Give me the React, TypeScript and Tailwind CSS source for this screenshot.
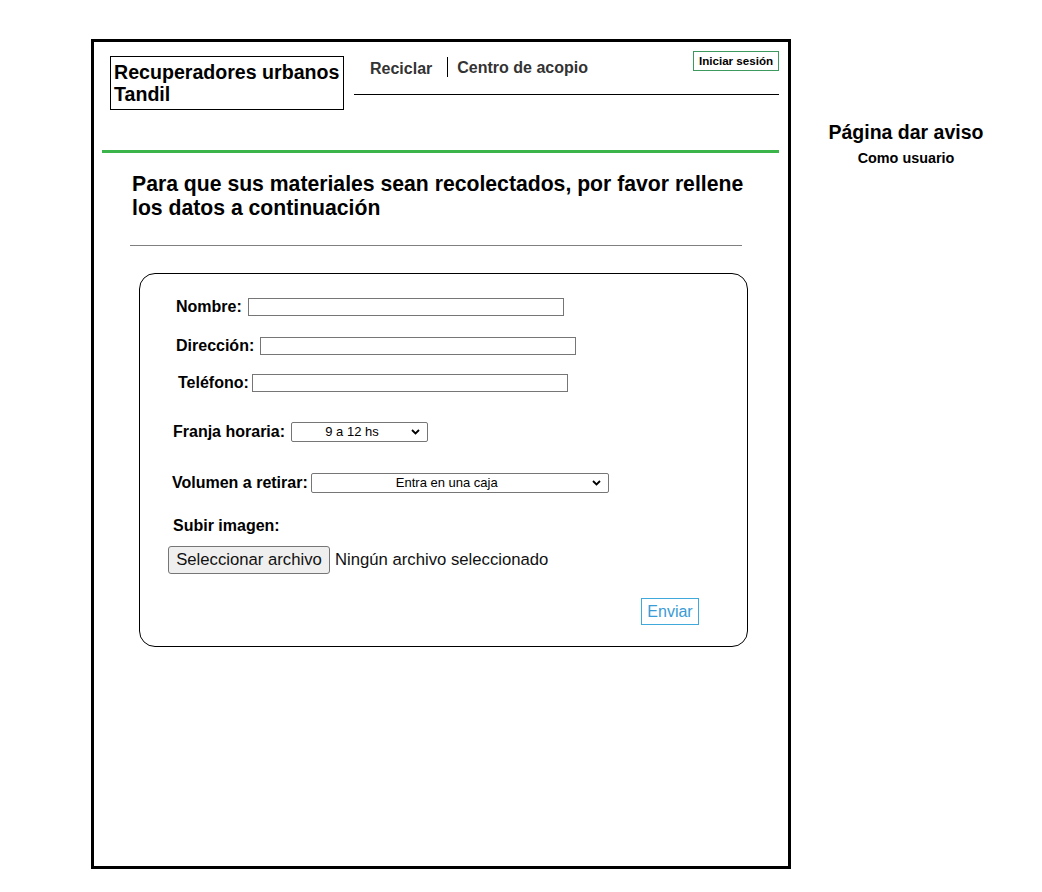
import React from "react";

const Chevron = () => (
  <svg width="9" height="6" viewBox="0 0 9 6" className="shrink-0">
    <path d="M1 1 L4.5 4.5 L8 1" fill="none" stroke="#000" strokeWidth="1.8" />
  </svg>
);

function FakeSelect({ value, width, pad }: { value: string; width: string; pad: string }) {
  return (
    <div className={`relative flex h-[20px] items-center border border-[#767676] bg-white rounded-[2px] ${width}`}>
      <span className={`flex-1 text-center text-[13px] leading-[18px] text-black ${pad}`}>{value}</span>
      <div className="absolute right-[7px] top-[6px] flex items-center">
        <Chevron />
      </div>
    </div>
  );
}

export default function App() {
  return (
    <div className="flex min-h-[892px] w-[1042px] bg-white pl-[91px] pt-[39px] text-black [font-family:'Liberation_Sans',Arial,sans-serif]">
      <div className="flex h-[830px] w-[700px] shrink-0 flex-col border-[3px] border-black">
        {/* Header */}
        <div className="flex items-start pt-[9px]">
          <div className="ml-[16px] mt-[5px] h-[54px] w-[234px] border border-black pl-[3px] pt-[4px] text-[19.6px] font-bold leading-[22px]">
            Recuperadores urbanos
            <br />
            Tandil
          </div>
          <div className="ml-[10px] flex h-[44px] w-[425px] items-start justify-between border-b border-black">
            <div className="flex items-start pl-[16px] text-[16px] font-bold leading-[20px] text-[#333]">
              <span className="mt-[8px]">Reciclar</span>
              <div className="ml-[15px] mt-[6px] h-[20px] w-px bg-black" />
              <span className="ml-[9px] mt-[7px]">Centro de acopio</span>
            </div>
            <div className="flex h-[20px] w-[86px] items-center justify-center border border-[#3c9a5f] pb-[1px] text-[11.6px] font-bold leading-[14px] text-black">
              Iniciar sesión
            </div>
          </div>
        </div>

        {/* Green line */}
        <div className="ml-[8px] mr-[9px] mt-[40px] h-[3px] bg-[#3bb54a]" />

        {/* Heading */}
        <h1 className="ml-[38px] mt-[19px] text-[21.2px] font-bold leading-[24px]">
          Para que sus materiales sean recolectados, por favor rellene
          <br />
          los datos a continuación
        </h1>

        <div className="ml-[36px] mt-[25px] h-px w-[612px] bg-[#808080]" />

        {/* Form card */}
        <div className="ml-[45px] mt-[27px] flex h-[374px] w-[609px] flex-col rounded-[16px] border border-black text-[16px]">
          <div className="ml-[36px] mt-[24px] flex h-[18px] items-center">
            <span className="font-bold leading-[18px]">Nombre:</span>
            <div className="ml-[6px] h-[18px] w-[316px] border border-[#767676] bg-white" />
          </div>
          <div className="ml-[36px] mt-[21px] flex h-[18px] items-center">
            <span className="-mt-[1px] font-bold leading-[18px]">Dirección:</span>
            <div className="ml-[6px] h-[18px] w-[316px] border border-[#767676] bg-white" />
          </div>
          <div className="ml-[38px] mt-[19px] flex h-[18px] items-center">
            <span className="font-bold leading-[18px]">Teléfono:</span>
            <div className="ml-[3px] h-[18px] w-[316px] border border-[#767676] bg-white" />
          </div>
          <div className="ml-[33px] mt-[30px] flex h-[20px] items-center">
            <span className="font-bold leading-[18px]">Franja horaria:</span>
            <div className="ml-[6px]">
              <FakeSelect value="9 a 12 hs" width="w-[137px]" pad="pr-[15px]" />
            </div>
          </div>
          <div className="ml-[32px] mt-[31px] flex h-[20px] items-center">
            <span className="font-bold leading-[18px]">Volumen a retirar:</span>
            <div className="ml-[3px]">
              <FakeSelect value="Entra en una caja" width="w-[298px]" pad="pr-[26px]" />
            </div>
          </div>
          <div className="ml-[33px] mt-[23px] font-bold leading-[20px]">Subir imagen:</div>
          <div className="ml-[28px] mt-[10px] flex items-center">
            <div className="flex h-[28px] w-[162px] items-center justify-center rounded-[3px] border border-[#767676] bg-[#efefef] text-[16.7px] text-[#111]">
              Seleccionar archivo
            </div>
            <span className="ml-[5px] text-[16.7px] text-[#111]">Ningún archivo seleccionado</span>
          </div>
          <div className="ml-[501px] mt-[24px] flex h-[27px] w-[58px] items-center justify-center border border-[#3fa9dc] text-[16px] text-[#3a9bd5]">
            Enviar
          </div>
        </div>
      </div>

      {/* Right notes */}
      <div className="flex w-[230px] flex-col items-center pt-[81px]">
        <div className="text-[19.5px] font-bold leading-[24px]">Página dar aviso</div>
        <div className="mt-[5px] text-[14.4px] font-bold leading-[18px]">Como usuario</div>
      </div>
    </div>
  );
}
